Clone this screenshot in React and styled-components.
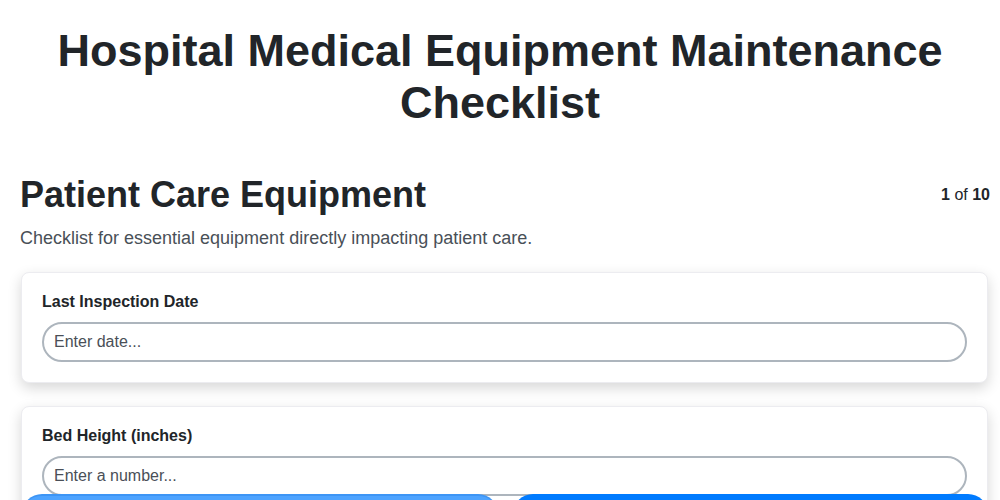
import React from 'react';
import styled, { createGlobalStyle } from 'styled-components';

const GlobalStyle = createGlobalStyle`
  * { box-sizing: border-box; }
  body {
    margin: 0;
    background: #ffffff;
    font-family: "Liberation Sans", Arial, sans-serif;
    color: #212529;
  }
`;

const Page = styled.div`
  padding: 25px 10px 40px 20px;
`;

const Title = styled.h1`
  margin: 0 -10px 45px -20px;
  padding: 0 40px;
  font-size: 45px;
  font-weight: 700;
  text-align: center;
  color: #212529;
`;

const SectionHead = styled.div`
  display: flex;
  justify-content: space-between;
  align-items: center;
`;

const SectionTitle = styled.h2`
  margin: 0;
  font-size: 36px;
  font-weight: 700;
  color: #212529;
`;

const Counter = styled.div`
  font-size: 16px;
  color: #212529;

  b {
    font-weight: 700;
  }
`;

const Description = styled.p`
  margin: 12px 0 23px;
  font-size: 18px;
  color: #495057;
`;

const Card = styled.div`
  margin: 0 2px 23px 1px;
  padding: 20px;
  background: #ffffff;
  border: 1px solid #ececf0;
  border-radius: 8px;
  box-shadow: 0 5px 14px rgba(0, 0, 0, 0.16);
`;

const Label = styled.label`
  display: block;
  margin-bottom: 11px;
  font-size: 16px;
  font-weight: 700;
  color: #212529;
`;

const Input = styled.input`
  display: block;
  width: 100%;
  height: 40px;
  padding: 0 10px;
  border: 2px solid #adb5bd;
  border-radius: 20px;
  background: #ffffff;
  font-family: "Liberation Sans", Arial, sans-serif;
  font-size: 16px;
  color: #212529;
  outline: none;

  &::placeholder {
    color: #4a4f57;
  }
`;

const Nav = styled.div`
  position: fixed;
  left: 22px;
  right: 12px;
  bottom: -34px;
  display: flex;
  gap: 15px;
`;

const NavButton = styled.button`
  flex: 1;
  height: 40px;
  border: none;
  border-radius: 20px;
  background: ${(p) => (p.disabled ? '#4da3ff' : '#007bff')};
  border-top: 2px solid ${(p) => (p.disabled ? '#3d95f5' : '#007bff')};
  color: #ffffff;
  font-family: "Liberation Sans", Arial, sans-serif;
  font-size: 16px;
  font-weight: 700;
`;

const fields = [
  { label: 'Last Inspection Date', placeholder: 'Enter date...' },
  { label: 'Bed Height (inches)', placeholder: 'Enter a number...' },
  { label: 'Infusion Pump Calibration', placeholder: 'Enter value...' },
];

const App = () => (
  <>
    <GlobalStyle />
    <Page>
      <Title>Hospital Medical Equipment Maintenance Checklist</Title>
      <SectionHead>
        <SectionTitle>Patient Care Equipment</SectionTitle>
        <Counter>
          <b>1</b> of <b>10</b>
        </Counter>
      </SectionHead>
      <Description>
        Checklist for essential equipment directly impacting patient care.
      </Description>
      {fields.map((f) => (
        <Card key={f.label}>
          <Label>{f.label}</Label>
          <Input type="text" placeholder={f.placeholder} />
        </Card>
      ))}
    </Page>
    <Nav>
      <NavButton disabled>Previous</NavButton>
      <NavButton>Next</NavButton>
    </Nav>
  </>
);

export default App;
